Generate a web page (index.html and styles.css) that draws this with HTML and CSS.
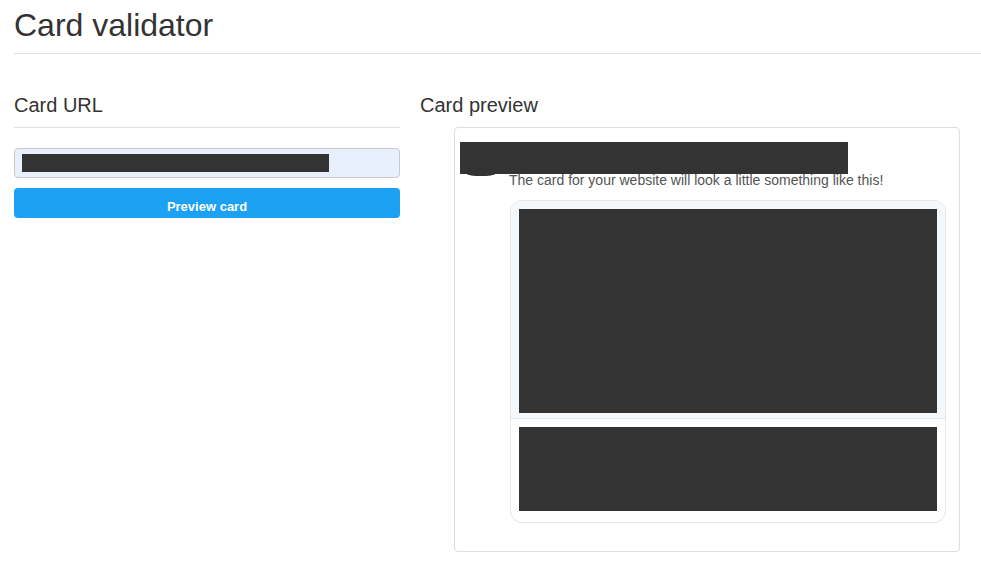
FILE: index.html
```html
<!DOCTYPE html>
<html lang="en">
<head>
    <meta charset="UTF-8">
    <meta name="viewport" content="width=device-width, initial-scale=1.0">
    <title>Card validator</title>
    <link rel="stylesheet" href="styles.css">
</head>
<body>

    <h1 class="page-title">Card validator</h1>

    <div class="columns">
        <div class="col-url">
            <h2 class="section-title">Card URL</h2>
            <div class="url-field"><span class="redacted url-redacted"></span></div>
            <button class="preview-btn">Preview card</button>
        </div>

        <div class="col-preview">
            <h2 class="section-title no-rule">Card preview</h2>
            <div class="preview-box">
                <div class="redacted header-redacted"></div>
                <div class="tweet">
                    <div class="avatar-stub"></div>
                    <div class="tweet-body">
                        <p class="tweet-text">The card for your website will look a little something like this!</p>
                        <div class="card">
                            <div class="card-image">
                                <div class="redacted image-redacted"></div>
                            </div>
                            <div class="card-info">
                                <div class="redacted info-redacted"></div>
                            </div>
                        </div>
                    </div>
                </div>
            </div>
        </div>
    </div>

</body>
</html>
```

FILE: styles.css
```css
body {
    margin: 0;
    padding-left: 14px;
    font-family: "Liberation Sans", Arial, sans-serif;
    color: #333;
    background-color: #fff;
}
.page-title {
    margin: 0;
    padding: 7px 0 10px;
    font-size: 32px;
    font-weight: normal;
    line-height: 36px;
    border-bottom: 1px solid #e0e0e0;
}
.columns {
    display: grid;
    grid-template-columns: 386px 506px;
    column-gap: 20px;
    margin-top: 39px;
}
.section-title {
    margin: 0;
    padding-bottom: 10px;
    font-size: 20px;
    font-weight: normal;
    line-height: 24px;
    border-bottom: 1px solid #e0e0e0;
}
.section-title.no-rule {
    border-bottom: none;
}
.redacted {
    background-color: #333;
}
.url-field {
    margin-top: 20px;
    height: 30px;
    box-sizing: border-box;
    padding: 5px 7px;
    background-color: #e8f0fe;
    border: 1px solid #c9c9c9;
    border-radius: 4px;
}
.url-redacted {
    display: block;
    width: 307px;
    height: 18px;
}
.preview-btn {
    display: block;
    width: 100%;
    height: 30px;
    margin-top: 10px;
    padding: 6px 0 0;
    border: none;
    border-radius: 4px;
    background-color: #1da1f2;
    color: #fff;
    font-family: "Liberation Sans", Arial, sans-serif;
    font-size: 13px;
    font-weight: bold;
    cursor: pointer;
}
.col-preview {
    display: flex;
    flex-direction: column;
}
.preview-box {
    margin-left: 34px;
    width: 506px;
    height: 425px;
    box-sizing: border-box;
    padding: 14px 13px 28px 5px;
    border: 1px solid #ddd;
    border-radius: 4px;
}
.header-redacted {
    width: 388px;
    height: 32px;
}
.tweet {
    display: grid;
    grid-template-columns: 49px 1fr;
}
.avatar-stub {
    width: 28px;
    height: 2px;
    margin-left: 7px;
    background-color: #333;
    border-radius: 0 0 14px 14px / 0 0 2px 2px;
}
.tweet-text {
    margin: -2px 0 0;
    font-size: 14px;
    line-height: 16px;
    color: #555;
}
.card {
    margin: 12px 0 0 1px;
    border: 1px solid #e1e8ed;
    border-radius: 12px;
    overflow: hidden;
}
.card-image {
    padding: 8px 8px 5px;
    background-color: #f5f8fa;
    border-bottom: 1px solid #e1e8ed;
}
.image-redacted {
    height: 204px;
}
.card-info {
    padding: 8px 8px 11px;
}
.info-redacted {
    height: 84px;
}
```
